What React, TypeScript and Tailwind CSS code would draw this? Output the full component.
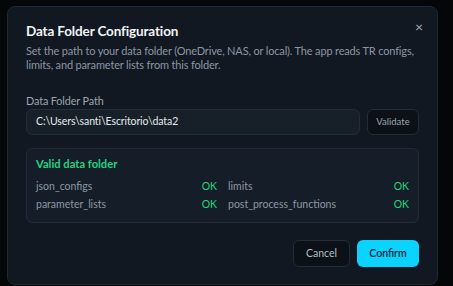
import React from "react";

const checks: [string, string][] = [
  ["json_configs", "limits"],
  ["parameter_lists", "post_process_functions"],
];

export default function App() {
  return (
    <div className="h-[286px] w-[453px] overflow-hidden bg-[#050607] pl-[7px] pt-[6px] font-['Lato',sans-serif]">
      <div className="relative h-[279px] w-[431px] rounded-lg border border-[#1f2833] bg-[#111821] px-[18px] pt-[15px]">
        <button className="absolute right-[14px] top-[13px] text-[14px] leading-none text-[#a3adb8]">×</button>
        <h2 className="text-[13.5px] font-bold leading-[18px] tracking-[-0.01em] text-[#f1f4f7]">Data Folder Configuration</h2>
        <p className="mt-[4px] text-[11px] leading-[14px] tracking-[-0.015em] text-[#8c96a1]">
          Set the path to your data folder (OneDrive, NAS, or local). The app reads TR configs, limits, and parameter lists from this folder.
        </p>
        <label className="mt-[22px] block text-[10.8px] leading-[14px] tracking-[-0.01em] text-[#9ca5af]">Data Folder Path</label>
        <div className="mt-[1px] flex gap-[7px]">
          <div className="flex h-[26px] flex-1 items-center rounded-md border border-[#232d39] bg-[#172029] px-[9px] text-[10.5px] tracking-[-0.01em] text-[#e6eaee]">
            C:\Users\santi\Escritorio\data2
          </div>
          <button className="h-[26px] w-[52px] rounded-md border border-[#232d39] bg-[#0b1117] text-[9.5px] text-[#9aa4af]">Validate</button>
        </div>
        <div className="mt-[13px] rounded-md border border-[#222c38] bg-[#151e28] px-[9px] pb-[9px] pt-[8px]">
          <div className="text-[11.2px] font-bold leading-[14px] text-[#22d47f]">Valid data folder</div>
          <div className="mt-[6px] grid grid-cols-2 gap-x-[11px]">
            {checks.map(([a, b]) => (
              <React.Fragment key={a}>
                <div className="flex justify-between text-[10.5px] leading-[18px]">
                  <span className="text-[#8d97a2]">{a}</span>
                  <span className="text-[#22d47f]">OK</span>
                </div>
                <div className="flex justify-between text-[10.5px] leading-[18px]">
                  <span className="text-[#8d97a2]">{b}</span>
                  <span className="text-[#22d47f]">OK</span>
                </div>
              </React.Fragment>
            ))}
          </div>
        </div>
        <div className="mt-[17px] flex justify-end gap-[7px]">
          <button className="h-[27px] w-[57px] rounded-md border border-[#232d39] bg-[#0b1117] text-[10.5px] text-[#b4bcc4]">Cancel</button>
          <button className="h-[27px] w-[62px] rounded-md bg-[#0ad3ff] text-[10.5px] font-semibold text-[#0c2232]">Confirm</button>
        </div>
      </div>
    </div>
  );
}
